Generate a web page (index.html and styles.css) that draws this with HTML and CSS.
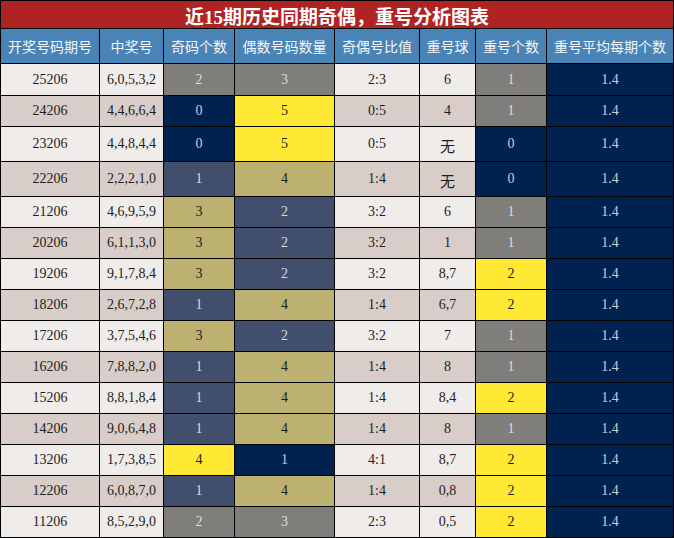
FILE: index.html
```html
<!DOCTYPE html>
<html lang="zh">
<head>
<meta charset="utf-8">
<link rel="stylesheet" href="styles.css">
</head>
<body>
<div class="sheet">
  <div class="title">近15期历史同期奇偶，重号分析图表</div>
  <div class="h">开奖号码期号</div><div class="h">中奖号</div><div class="h">奇码个数</div><div class="h">偶数号码数量</div><div class="h">奇偶号比值</div><div class="h">重号球</div><div class="h">重号个数</div><div class="h">重号平均每期个数</div>

  <div class="c l">25206</div><div class="c l">6,0,5,3,2</div><div class="c gray">2</div><div class="c gray">3</div><div class="c l">2:3</div><div class="c l">6</div><div class="c gray">1</div><div class="c navy">1.4</div>
  <div class="c d">24206</div><div class="c d">4,4,6,6,4</div><div class="c navy">0</div><div class="c yel">5</div><div class="c d">0:5</div><div class="c d">4</div><div class="c gray">1</div><div class="c navy">1.4</div>
  <div class="c l">23206</div><div class="c l">4,4,8,4,4</div><div class="c navy">0</div><div class="c yel">5</div><div class="c l">0:5</div><div class="c l cjk">无</div><div class="c navy">0</div><div class="c navy">1.4</div>
  <div class="c d">22206</div><div class="c d">2,2,2,1,0</div><div class="c slate">1</div><div class="c khaki">4</div><div class="c d">1:4</div><div class="c d cjk">无</div><div class="c navy">0</div><div class="c navy">1.4</div>
  <div class="c l">21206</div><div class="c l">4,6,9,5,9</div><div class="c khaki">3</div><div class="c slate">2</div><div class="c l">3:2</div><div class="c l">6</div><div class="c gray">1</div><div class="c navy">1.4</div>
  <div class="c d">20206</div><div class="c d">6,1,1,3,0</div><div class="c khaki">3</div><div class="c slate">2</div><div class="c d">3:2</div><div class="c d">1</div><div class="c gray">1</div><div class="c navy">1.4</div>
  <div class="c l">19206</div><div class="c l">9,1,7,8,4</div><div class="c khaki">3</div><div class="c slate">2</div><div class="c l">3:2</div><div class="c l">8,7</div><div class="c yel">2</div><div class="c navy">1.4</div>
  <div class="c d">18206</div><div class="c d">2,6,7,2,8</div><div class="c slate">1</div><div class="c khaki">4</div><div class="c d">1:4</div><div class="c d">6,7</div><div class="c yel">2</div><div class="c navy">1.4</div>
  <div class="c l">17206</div><div class="c l">3,7,5,4,6</div><div class="c khaki">3</div><div class="c slate">2</div><div class="c l">3:2</div><div class="c l">7</div><div class="c gray">1</div><div class="c navy">1.4</div>
  <div class="c d">16206</div><div class="c d">7,8,8,2,0</div><div class="c slate">1</div><div class="c khaki">4</div><div class="c d">1:4</div><div class="c d">8</div><div class="c gray">1</div><div class="c navy">1.4</div>
  <div class="c l">15206</div><div class="c l">8,8,1,8,4</div><div class="c slate">1</div><div class="c khaki">4</div><div class="c l">1:4</div><div class="c l">8,4</div><div class="c yel">2</div><div class="c navy">1.4</div>
  <div class="c d">14206</div><div class="c d">9,0,6,4,8</div><div class="c slate">1</div><div class="c khaki">4</div><div class="c d">1:4</div><div class="c d">8</div><div class="c gray">1</div><div class="c navy">1.4</div>
  <div class="c l">13206</div><div class="c l">1,7,3,8,5</div><div class="c yel">4</div><div class="c navy">1</div><div class="c l">4:1</div><div class="c l">8,7</div><div class="c yel">2</div><div class="c navy">1.4</div>
  <div class="c d">12206</div><div class="c d">6,0,8,7,0</div><div class="c slate">1</div><div class="c khaki">4</div><div class="c d">1:4</div><div class="c d">0,8</div><div class="c yel">2</div><div class="c navy">1.4</div>
  <div class="c l">11206</div><div class="c l">8,5,2,9,0</div><div class="c gray">2</div><div class="c gray">3</div><div class="c l">2:3</div><div class="c l">0,5</div><div class="c yel">2</div><div class="c navy">1.4</div>
</div>
</body>
</html>
```

FILE: styles.css
```css
html, body {
  margin: 0;
  padding: 0;
  background: #ffffff;
}
.sheet {
  width: 674px;
  box-sizing: border-box;
  display: grid;
  grid-template-columns: 98px 63px 70px 99px 84px 55px 70px 126px;
  grid-template-rows: 27px 34px 31px 30px 34px 34px repeat(11, 30px);
  gap: 1px;
  padding: 1px;
  background: #000000;
  font-family: "Liberation Serif", "Noto Sans CJK SC", serif;
}
.title {
  grid-column: 1 / -1;
  background: #b02323;
  color: #ffffff;
  font-weight: bold;
  font-size: 19px;
  display: flex;
  align-items: center;
  justify-content: center;
  padding-top: 1px;
}
.h {
  background: #4a83b6;
  color: #f4f6f8;
  font-size: 14px;
  display: flex;
  align-items: center;
  justify-content: center;
  white-space: nowrap;
}
.c {
  font-size: 14px;
  display: flex;
  align-items: center;
  justify-content: center;
  color: #1e1e1e;
}
.cjk {
  font-size: 15px;
  padding-top: 2px;
}
.l { background: #f0ecea; }
.d { background: #d8cdc9; }
.gray { background: #7f7e7a; color: #dcdcdc; }
.navy { background: #01214f; color: #c9cdd6; }
.slate { background: #414f6d; color: #d6d9e0; }
.khaki { background: #bdb171; color: #1e1e1e; }
.yel { background: #ffe935; color: #1e1e1e; }
```
